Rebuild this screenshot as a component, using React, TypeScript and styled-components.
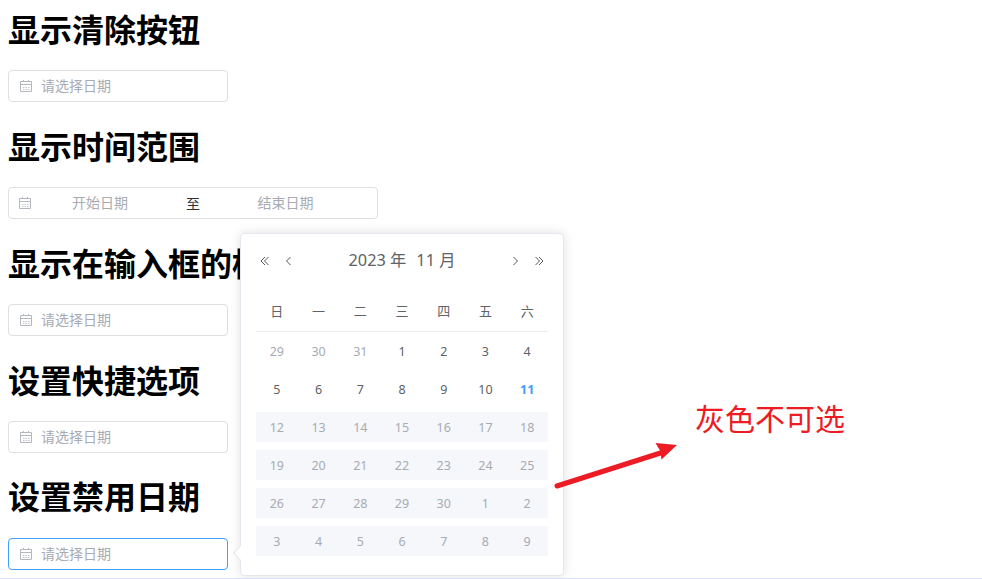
import React from "react";
import styled, { createGlobalStyle, css } from "styled-components";

const Global = createGlobalStyle`
  *, *::before, *::after { box-sizing: border-box; }
  html, body { margin: 0; padding: 0; background: #fff; overflow: hidden; }
  body { font-family: "Noto Sans", "Noto Sans CJK SC", sans-serif; }
`;

const Page = styled.div`
  position: relative;
  width: 982px;
  height: 579px;
  overflow: hidden;
  padding: 6px 8px 0;
  border-bottom: 1px solid #d5e0fb;
`;

const Section = styled.section`
  height: 117px;
`;

const Heading = styled.h1<{ $raised?: boolean }>`
  margin: 0;
  height: 64px;
  padding-bottom: 20px;
  font: 700 32px/${(p) => (p.$raised ? 42 : 44)}px "Noto Sans CJK SC", sans-serif;
  color: #000;
  white-space: nowrap;
`;

const Field = styled.div<{ $active?: boolean; $range?: boolean }>`
  display: flex;
  align-items: center;
  width: ${(p) => (p.$range ? 370 : 220)}px;
  height: 32px;
  padding-left: ${(p) => (p.$range ? 9 : 10)}px;
  border: 1px solid ${(p) => (p.$active ? "#409eff" : "#dcdfe6")};
  border-radius: 4px;
  background: #fff;
  font: 14px/28px "Noto Sans CJK SC", sans-serif;
`;

const Placeholder = styled.span`
  height: 30px;
  margin-left: 8px;
  color: #a8abb2;
`;

const RangeText = styled.span<{ $width: number; $dark?: boolean }>`
  width: ${(p) => p.$width}px;
  height: 30px;
  line-height: ${(p) => (p.$dark ? 30 : 28)}px;
  text-align: center;
  color: ${(p) => (p.$dark ? "#303133" : "#a8abb2")};
`;

const CalendarSvg = styled.svg`
  flex: none;
  display: block;
`;

const Popper = styled.div`
  position: absolute;
  left: 240px;
  top: 233px;
  width: 324px;
  height: 343px;
  padding: 12px 15px 0;
  background: #fff;
  border: 1px solid #e4e7ed;
  border-radius: 4px;
  box-shadow: 0 0 12px rgba(0, 0, 0, 0.12);
  color: #606266;
`;

const Pointer = styled.span`
  position: absolute;
  left: -6px;
  top: 314px;
  width: 10px;
  height: 10px;
  background: #fff;
  border: 1px solid #e4e7ed;
  border-top-color: transparent;
  border-right-color: transparent;
  transform: rotate(45deg);
`;

const PanelHeader = styled.header`
  display: flex;
  align-items: center;
  justify-content: space-between;
  height: 30px;
  padding: 0 3px;
`;

const NavGroup = styled.div`
  display: flex;
  gap: 12px;
`;

const NavButton = styled.button`
  display: block;
  width: 12px;
  height: 12px;
  padding: 0;
  border: 0;
  background: none;
  color: #55575b;
  svg { display: block; }
`;

const PanelTitle = styled.div`
  display: flex;
  gap: 10px;
  height: 30px;
  font-size: 16.3px;
  line-height: 28px;
  white-space: pre;
`;

const Week = styled.div<{ $head?: boolean }>`
  display: grid;
  grid-template-columns: repeat(7, 1fr);
  height: 38px;
  padding: 4px 0;
  ${(p) =>
    p.$head &&
    css`
      height: 41px;
      margin-top: 15px;
      padding: 0;
      border-bottom: 1px solid #ebeef5;
    `}
`;

const WeekDay = styled.span`
  text-align: center;
  font-size: 13px;
  line-height: 41px;
`;

type DayKind = "normal" | "other" | "today" | "disabled";

const dayColors: Record<DayKind, string> = {
  normal: "#606266",
  other: "#a8abb2",
  today: "#409eff",
  disabled: "#a8abb2",
};

const Day = styled.span<{ $kind: DayKind }>`
  height: 30px;
  line-height: 32px;
  font-size: 12.5px;
  text-align: center;
  color: ${(p) => dayColors[p.$kind]};
  font-weight: ${(p) => (p.$kind === "today" ? 700 : 400)};
  background: ${(p) => (p.$kind === "disabled" ? "#f5f7fa" : "transparent")};
`;

const Note = styled.div`
  position: absolute;
  left: 695px;
  top: 396px;
  font: 30px/42px "Noto Sans CJK SC", sans-serif;
  color: #ed1c24;
  white-space: nowrap;
`;

const Arrow = styled.svg`
  position: absolute;
  left: 550px;
  top: 436px;
`;

const CalendarIcon = () => (
  <CalendarSvg width="14" height="14" viewBox="0 0 14 14" fill="none" stroke="#b4b7be">
    <path d="M1.5 2.500h11v10h-11zM1.5 5.500h11" />
    <path d="M4 1.500h1M9 1.500h1" />
    <path d="M4 8.500h1.500M6.500 8.500H8M9 8.500h1.500M4 10.500h1.500M6.500 10.500H8M9 10.500h1.500" strokeOpacity="0.8" />
  </CalendarSvg>
);

const Chevron = ({ double, right }: { double?: boolean; right?: boolean }) => (
  <NavButton>
    <svg width="12" height="12" viewBox="0 0 12 12" fill="none" stroke="currentColor">
      <g transform={right ? "translate(12 0) scale(-1 1)" : undefined}>
        {double ? <path d="M6 2 2 6l4 4M9.500 2 5.500 6l4 4" /> : <path d="M7.500 2l-4 4 4 4" />}
      </g>
    </svg>
  </NavButton>
);

const DateField = ({ active }: { active?: boolean }) => (
  <Field $active={active}>
    <CalendarIcon />
    <Placeholder>请选择日期</Placeholder>
  </Field>
);

const weekDays = ["日", "一", "二", "三", "四", "五", "六"];
const weeks = [
  [29, 30, 31, 1, 2, 3, 4],
  [5, 6, 7, 8, 9, 10, 11],
  [12, 13, 14, 15, 16, 17, 18],
  [19, 20, 21, 22, 23, 24, 25],
  [26, 27, 28, 29, 30, 1, 2],
  [3, 4, 5, 6, 7, 8, 9],
];

const kindOf = (row: number, day: number): DayKind => {
  if (row >= 2) return "disabled";
  if (row === 0 && day > 20) return "other";
  return day === 11 ? "today" : "normal";
};

export default function App() {
  return (
    <Page>
      <Global />
      <Section>
        <Heading>显示清除按钮</Heading>
        <DateField />
      </Section>
      <Section>
        <Heading>显示时间范围</Heading>
        <Field $range>
          <CalendarIcon />
          <RangeText $width={136}>开始日期</RangeText>
          <RangeText $width={50} $dark>至</RangeText>
          <RangeText $width={135}>结束日期</RangeText>
        </Field>
      </Section>
      <Section>
        <Heading>显示在输入框的标题</Heading>
        <DateField />
      </Section>
      <Section>
        <Heading>设置快捷选项</Heading>
        <DateField />
      </Section>
      <Section>
        <Heading $raised>设置禁用日期</Heading>
        <DateField active />
      </Section>

      <Popper>
        <Pointer />
        <PanelHeader>
          <NavGroup>
            <Chevron double />
            <Chevron />
          </NavGroup>
          <PanelTitle>
            <span>2023 年</span>
            <span>11 月</span>
          </PanelTitle>
          <NavGroup>
            <Chevron right />
            <Chevron double right />
          </NavGroup>
        </PanelHeader>
        <Week $head>
          {weekDays.map((d) => (
            <WeekDay key={d}>{d}</WeekDay>
          ))}
        </Week>
        {weeks.map((week, row) => (
          <Week key={row}>
            {week.map((day) => (
              <Day key={day} $kind={kindOf(row, day)}>{day}</Day>
            ))}
          </Week>
        ))}
      </Popper>

      <Arrow width="130" height="56" viewBox="0 0 130 56">
        <path d="M7 50 112 16.500" stroke="#ed1c24" strokeWidth="5" strokeLinecap="round" fill="none" />
        <path d="M127 9 105.500 7 110 14.500 111.500 23.500Z" fill="#ed1c24" />
      </Arrow>
      <Note>灰色不可选</Note>
    </Page>
  );
}
